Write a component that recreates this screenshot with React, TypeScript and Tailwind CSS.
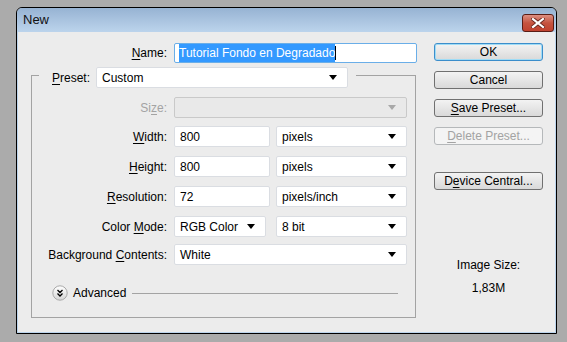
const font = { fontFamily: '"Liberation Sans", Arial, sans-serif' };

function Arrow({ disabled }: { disabled?: boolean }) {
  return (
    <svg width="8" height="5" viewBox="0 0 8 5" className="shrink-0">
      <path d="M0 0h8L4 5z" fill={disabled ? '#a8a8a8' : '#000'} />
    </svg>
  );
}

function Field({ value, w }: { value: string; w: string }) {
  return (
    <div className={`${w} h-[21px] bg-white border border-[#dadde2] rounded-[2px] flex items-center px-[5px]`}>
      {value}
    </div>
  );
}

function Select({ value, w, disabled }: { value: string; w: string; disabled?: boolean }) {
  return (
    <div
      className={`${w} h-[21px] border rounded-[2px] flex items-center justify-between pl-[5px] pr-[10px] ${
        disabled ? 'bg-[#e9e9e9] border-[#c9c9c9]' : 'bg-white border-[#dadde2]'
      }`}
    >
      <span>{value}</span>
      <Arrow disabled={disabled} />
    </div>
  );
}

function Label({ children, w, disabled }: { children: React.ReactNode; w: string; disabled?: boolean }) {
  return (
    <div className={`${w} text-right shrink-0 ${disabled ? 'text-[#a3a3a3]' : ''}`}>{children}</div>
  );
}

function Btn({ children, primary, disabled }: { children: React.ReactNode; primary?: boolean; disabled?: boolean }) {
  return (
    <div
      className={`w-[109px] h-[18px] rounded-[3px] border flex items-center justify-center bg-gradient-to-b ${
        disabled
          ? 'border-[#b5b8ba] from-[#f4f4f4] to-[#f4f4f4] text-[#a3a3a3]'
          : primary
          ? 'border-[#3c8ecb] from-[#f3f3f3] to-[#d9d9d9] shadow-[inset_0_0_0_1px_#9fdcf6]'
          : 'border-[#707070] from-[#f3f3f3] to-[#d9d9d9]'
      }`}
    >
      {children}
    </div>
  );
}

const U = ({ c }: { c: string }) => <span className="underline underline-offset-2">{c}</span>;

export default function App() {
  return (
    <div className="w-[567px] h-[342px] bg-[#ababab] pt-[7px] pl-[16px] text-[12px] text-black" style={font}>
      <div className="w-[541px] h-[327px] border border-black rounded-t-[6px] flex flex-col overflow-hidden">
        {/* Title bar */}
        <div className="h-[24px] shrink-0 bg-gradient-to-b from-[#97b3d3] to-[#bcd4ec] flex items-center justify-between pl-[6px] pr-[2px]">
          <span className="text-[13px] text-[#111]">New</span>
          <div className="w-[32px] h-[18px] mt-[5px] rounded-[3px] border border-[#5a1d15] bg-gradient-to-b from-[#dc8f82] via-[#c5533f] to-[#c0412e] flex items-center justify-center">
            <svg width="14" height="10" viewBox="0 0 14 10">
              <path d="M2 1l10 8M12 1L2 9" stroke="#6b2a22" strokeWidth="4" strokeLinecap="square" />
              <path d="M2 1l10 8M12 1L2 9" stroke="#fff" strokeWidth="2.2" strokeLinecap="square" />
            </svg>
          </div>
        </div>

        {/* Client */}
        <div className="flex-1 bg-[#ececec] border-x border-b border-[#bcd4ec] flex">
          {/* Left column */}
          <div className="w-[399px] shrink-0 pt-[11px]">
            <div className="flex items-center gap-[7px]">
              <Label w="w-[149px]">
                <U c="N" />ame:
              </Label>
              <div className="w-[243px] h-[20px] bg-white border border-[#6aaee8] rounded-[2px] flex items-center px-[4px]">
                <span className="bg-[#3399ff] text-white">Tutorial Fondo en Degradado</span>
                <span className="w-[1px] h-[14px] bg-black" />
              </div>
            </div>

            {/* Group box */}
            <div className="ml-[13px] mt-[12px] w-[385px] h-[243px] border border-[#a3a3a3]">
              <div className="-mt-[9px] ml-[7px] w-[317px] bg-[#ececec] flex items-center gap-[6px] pl-[13px] pr-[7px]">
                <span>
                  <U c="P" />reset:
                </span>
                <Select value="Custom" w="w-[252px]" />
              </div>

              <div className="mt-[9px] flex items-center gap-[7px]">
                <Label w="w-[135px]" disabled>
                  Si<U c="z" />e:
                </Label>
                <Select value="" w="w-[233px]" disabled />
              </div>

              <div className="mt-[8px] flex items-center gap-[7px]">
                <Label w="w-[135px]">
                  <U c="W" />idth:
                </Label>
                <Field value="800" w="w-[96px]" />
                <Select value="pixels" w="w-[131px] ml-[-1px]" />
              </div>

              <div className="mt-[9px] flex items-center gap-[7px]">
                <Label w="w-[135px]">
                  <U c="H" />eight:
                </Label>
                <Field value="800" w="w-[96px]" />
                <Select value="pixels" w="w-[131px] ml-[-1px]" />
              </div>

              <div className="mt-[9px] flex items-center gap-[7px]">
                <Label w="w-[135px]">
                  <U c="R" />esolution:
                </Label>
                <Field value="72" w="w-[96px]" />
                <Select value="pixels/inch" w="w-[131px] ml-[-1px]" />
              </div>

              <div className="mt-[9px] flex items-center gap-[7px]">
                <Label w="w-[135px]">
                  Color <U c="M" />ode:
                </Label>
                <Select value="RGB Color" w="w-[92px]" />
                <Select value="8 bit" w="w-[131px] ml-[3px]" />
              </div>

              <div className="mt-[7px] flex items-center gap-[7px]">
                <Label w="w-[135px]">
                  Background <U c="C" />ontents:
                </Label>
                <Select value="White" w="w-[233px]" />
              </div>

              <div className="mt-[19px] h-[18px] flex items-center pl-[20px] pr-[17px]">
                <svg width="16" height="16" viewBox="0 0 16 16" className="shrink-0">
                  <defs>
                    <linearGradient id="adv" x1="0" y1="0" x2="0" y2="1">
                      <stop offset="0" stopColor="#ffffff" />
                      <stop offset="1" stopColor="#d6d6d6" />
                    </linearGradient>
                  </defs>
                  <circle cx="8" cy="8" r="7.2" fill="url(#adv)" stroke="#a9a9a9" />
                  <path d="M5.5 5l2.5 2.5L10.5 5M5.5 8.5L8 11l2.5-2.5" fill="none" stroke="#000" strokeWidth="1.3" />
                </svg>
                <span className="ml-[5px]">Advanced</span>
                <div className="flex-1 ml-[6px] h-[1px] bg-[#a3a3a3]" />
              </div>
            </div>
          </div>

          {/* Right column */}
          <div className="ml-[17px] pt-[11px] flex flex-col items-center w-[109px]">
            <div className="flex flex-col gap-[10px]">
              <Btn primary>OK</Btn>
              <Btn>Cancel</Btn>
              <Btn>
                <U c="S" />
                ave Preset...
              </Btn>
              <Btn disabled>
                <U c="D" />
                elete Preset...
              </Btn>
            </div>
            <div className="mt-[27px]">
              <Btn>
                D<U c="e" />
                vice Central...
              </Btn>
            </div>
            <div className="mt-[68px] text-center leading-[14px]">Image Size:</div>
            <div className="mt-[9px] text-center leading-[14px]">1,83M</div>
          </div>
        </div>
      </div>
    </div>
  );
}
